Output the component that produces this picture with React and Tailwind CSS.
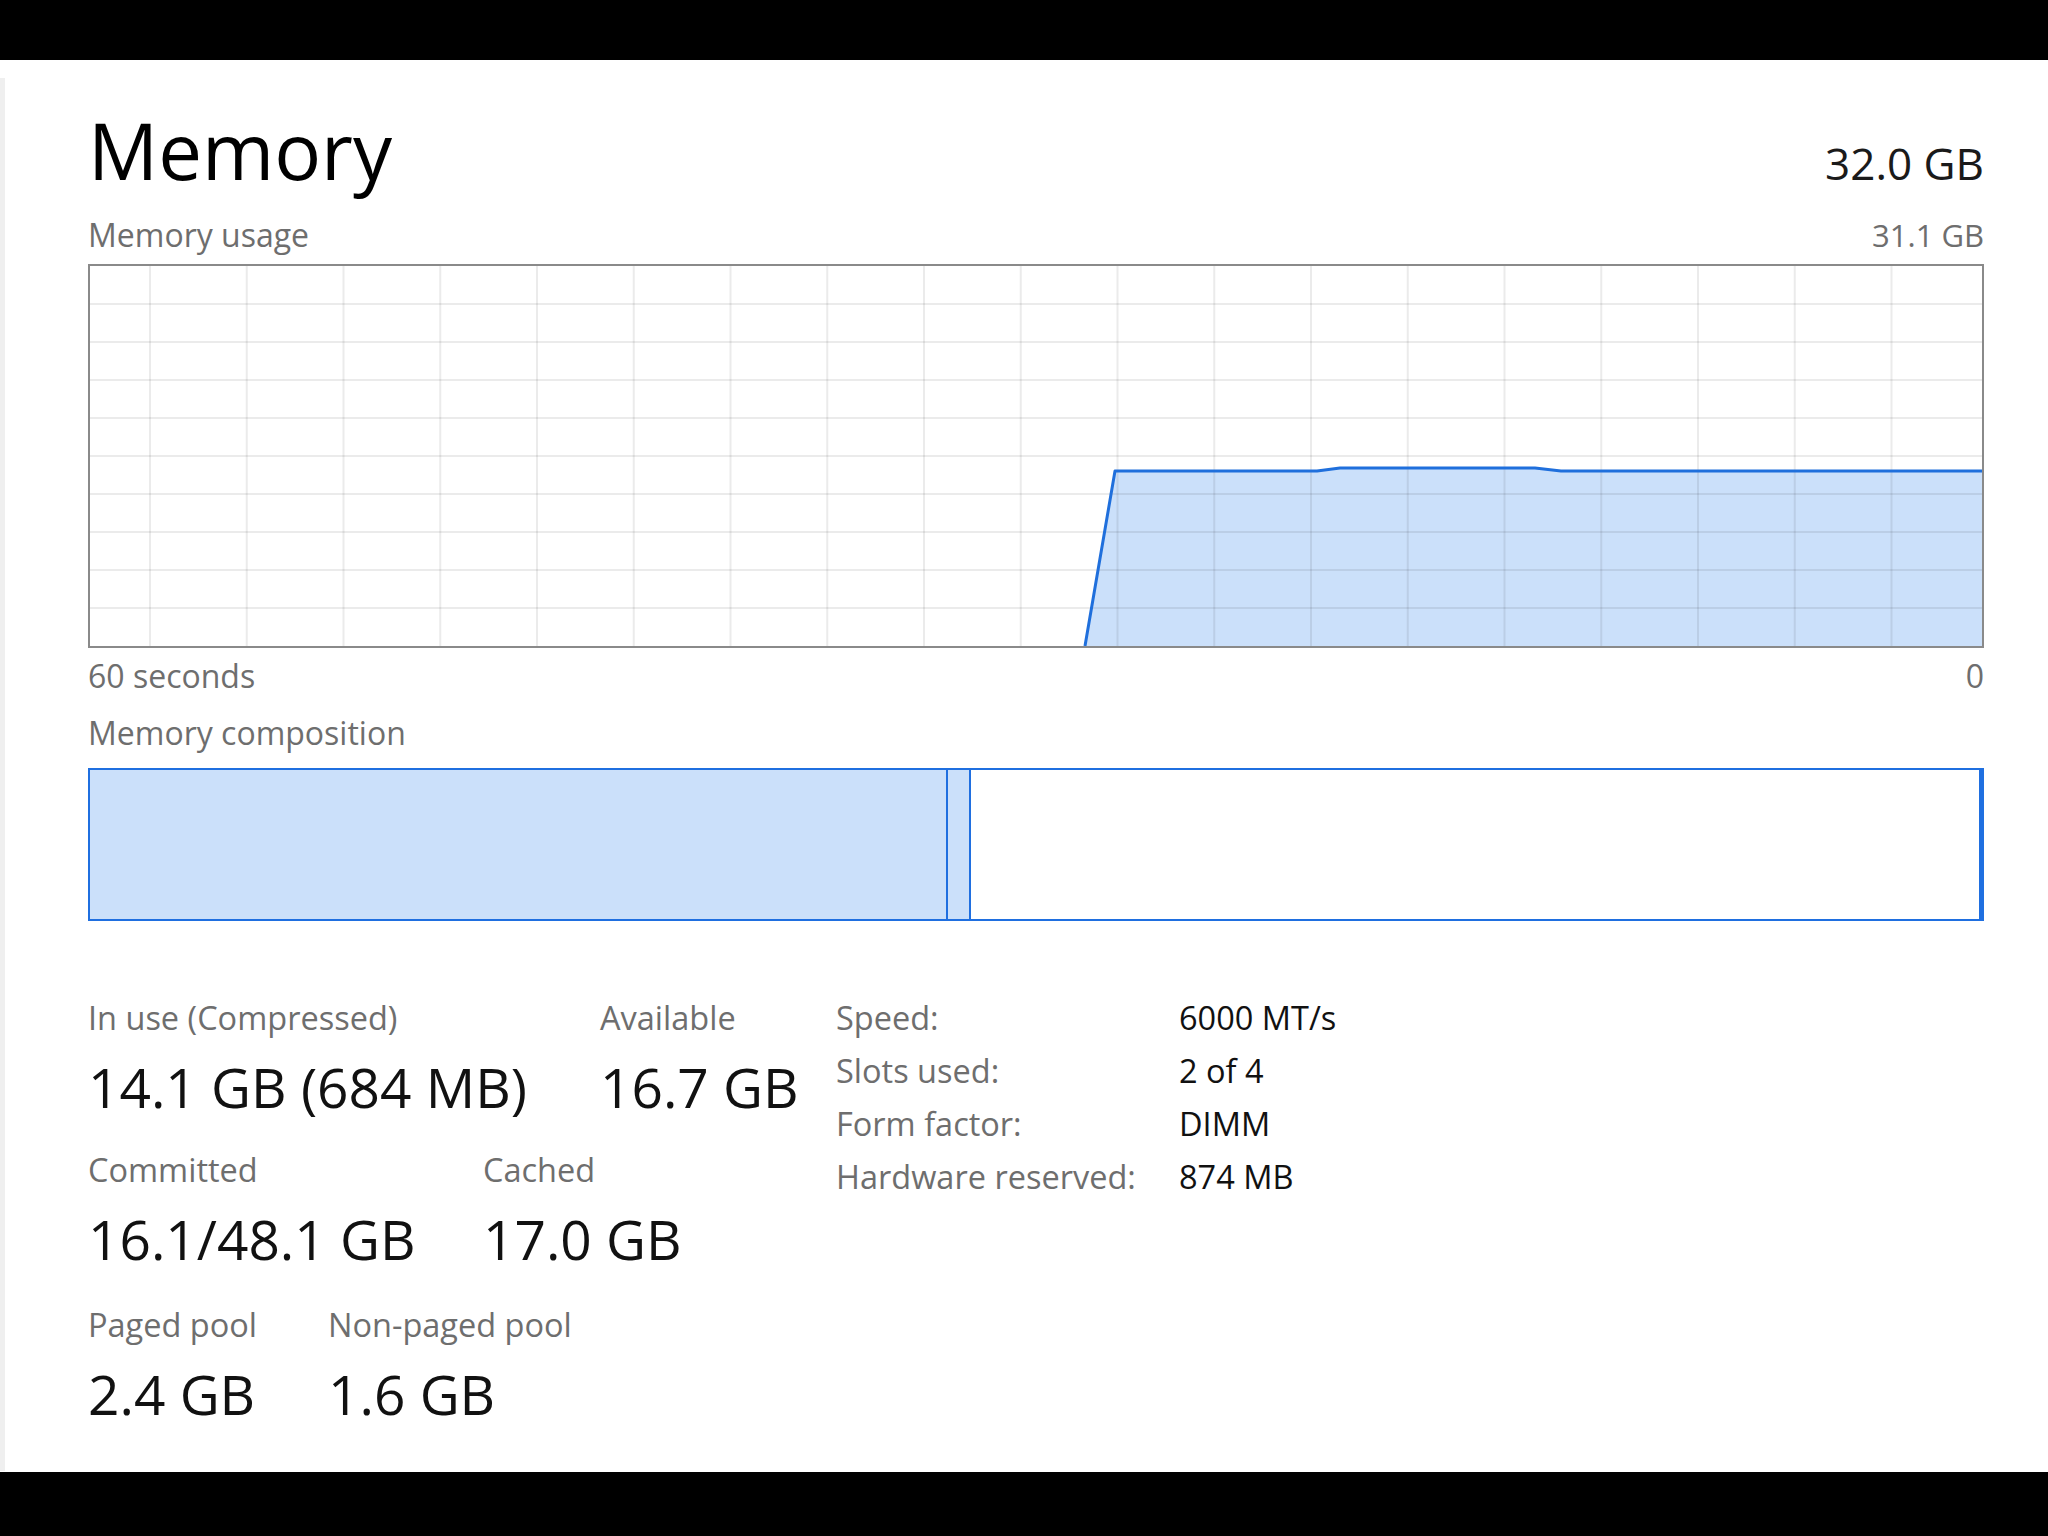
import React from 'react';

const font = { fontFamily: '"Segoe UI", "Open Sans", "Noto Sans", sans-serif' };

const GRID_X = Array.from({ length: 19 }, (_, i) => 60 + i * 96.75);
const GRID_Y = Array.from({ length: 9 }, (_, i) => 38 * (i + 1));

const AREA = 'M995,380 L1025,205 L1227,205 L1250,202 L1445,202 L1471,205 L1892,205 L1892,380 Z';
const LINE = 'M995,380 L1025,205 L1227,205 L1250,202 L1445,202 L1471,205 L1892,205';

const UsageGraph = () => (
  <div className="mt-[13px] h-[384px] border-2 border-[#8a8a8a] bg-white">
    <svg className="block h-full w-full" viewBox="0 0 1892 380" preserveAspectRatio="none">
      <path d={AREA} fill="#cbe0fa" />
      {GRID_X.map((x) => (
        <line key={`x${x}`} x1={x} y1={0} x2={x} y2={380} stroke="#000" strokeOpacity="0.08" strokeWidth="2" />
      ))}
      {GRID_Y.map((y) => (
        <line key={`y${y}`} x1={0} y1={y} x2={1892} y2={y} stroke="#000" strokeOpacity="0.08" strokeWidth="2" />
      ))}
      <path d={LINE} fill="none" stroke="#1f6fdc" strokeWidth="3" strokeLinejoin="round" />
    </svg>
  </div>
);

const CompositionBar = () => (
  <div className="mt-[19px] flex h-[153px] border-2 border-[#1f6fe0]">
    <div className="w-[858px] border-r-2 border-[#1f6fe0] bg-[#cbe0fa]" />
    <div className="w-[23px] border-r-2 border-[#1f6fe0] bg-[#cbe0fa]" />
    <div className="flex-1 border-r-[3px] border-[#1f6fe0] bg-white" />
  </div>
);

const Stat = ({ label, value, className = '' }) => (
  <div className={className}>
    <div className="whitespace-nowrap text-[32.5px] leading-[32px] text-[#6e6e6e]">{label}</div>
    <div className="mt-[26px] whitespace-nowrap text-[55px] leading-[54px] text-[#111]">{value}</div>
  </div>
);

const details = [
  ['Speed:', '6000 MT/s'],
  ['Slots used:', '2 of 4'],
  ['Form factor:', 'DIMM'],
  ['Hardware reserved:', '874 MB'],
];

export default function App() {
  return (
    <div className="flex h-[1536px] w-[2048px] flex-col bg-black" style={font}>
      <div className="h-[60px] shrink-0 bg-black" />
      <div className="flex h-[1412px] shrink-0 bg-white">
        <div className="mt-[18px] mb-[1px] w-[5px] bg-[#efefef]" />
        <div className="flex flex-1 flex-col pl-[83px] pr-[64px]">
          <div className="mt-[51px] flex items-baseline justify-between">
            <h1 className="text-[78px] leading-[78px] text-black">Memory</h1>
            <span className="text-[44px] leading-[44px] text-[#1a1a1a]">32.0 GB</span>
          </div>

          <div className="mt-[30px] flex items-baseline justify-between text-[#6e6e6e]">
            <span className="text-[32px] leading-[32px]">Memory usage</span>
            <span className="text-[31px] leading-[32px]">31.1 GB</span>
          </div>

          <UsageGraph />

          <div className="mt-[12px] flex justify-between text-[32px] leading-[32px] text-[#6e6e6e]">
            <span>60 seconds</span>
            <span>0</span>
          </div>

          <div className="mt-[25px] text-[32px] leading-[32px] text-[#6e6e6e]">Memory composition</div>

          <CompositionBar />

          <div className="mt-[81px] flex items-start">
            <div className="w-[748px]">
              <div className="flex">
                <Stat className="w-[512px]" label="In use (Compressed)" value="14.1 GB (684 MB)" />
                <Stat label="Available" value="16.7 GB" />
              </div>
              <div className="mt-[40px] flex">
                <Stat className="w-[395px]" label="Committed" value="16.1/48.1 GB" />
                <Stat label="Cached" value="17.0 GB" />
              </div>
              <div className="mt-[43px] flex">
                <Stat className="w-[240px]" label="Paged pool" value="2.4 GB" />
                <Stat label="Non-paged pool" value="1.6 GB" />
              </div>
            </div>

            <div className="grid grid-cols-[343px_auto] content-start gap-y-[21px] text-[32.5px] leading-[32px]">
              {details.map(([k, v]) => (
                <React.Fragment key={k}>
                  <span className="whitespace-nowrap text-[#6e6e6e]">{k}</span>
                  <span className="whitespace-nowrap text-[#111]">{v}</span>
                </React.Fragment>
              ))}
            </div>
          </div>
        </div>
      </div>
      <div className="flex-1 bg-black" />
    </div>
  );
}
